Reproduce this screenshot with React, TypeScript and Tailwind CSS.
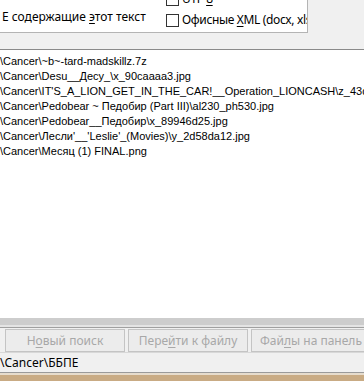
import React from "react";

const files = [
  "\\Cancer\\~b~-tard-madskillz.7z",
  "\\Cancer\\Desu__Десу_\\x_90caaaa3.jpg",
  "\\Cancer\\IT'S_A_LION_GET_IN_THE_CAR!__Operation_LIONCASH\\z_43d0b1f2.jpg",
  "\\Cancer\\Pedobear ~ Педобир (Part III)\\al230_ph530.jpg",
  "\\Cancer\\Pedobear__Педобир\\x_89946d25.jpg",
  "\\Cancer\\Лесли'__'Leslie'_(Movies)\\y_2d58da12.jpg",
  "\\Cancer\\Месяц (1) FINAL.png",
];

function Checkbox() {
  return <div className="w-[13px] h-[13px] border border-[#333333] bg-white shrink-0" />;
}

function Btn({ pre, u, post }: { pre: string; u: string; post: string }) {
  return (
    <div className="w-[120px] h-[23px] shrink-0 border border-[#c4c4c4] bg-[#ececec] flex items-center justify-center text-[#a8a8a8]">
      <span>
        {pre}
        <span className="underline underline-offset-2">{u}</span>
        {post}
      </span>
    </div>
  );
}

export default function App() {
  return (
    <div
      className="w-[364px] h-[381px] overflow-hidden bg-[#f0f0f0] text-[12px] text-black flex flex-col"
      style={{ fontFamily: '"Noto Sans", "Liberation Sans", sans-serif' }}
    >
      {/* tab page */}
      <div className="flex h-[33px] shrink-0">
        <div className="w-[308px] h-[33px] bg-white border-r border-b border-[#b4b4b4] flex overflow-hidden">
          <div className="w-[166px] shrink-0 pl-[2px] pt-[8px] leading-[17px] whitespace-nowrap">
            Е содержащие <span className="underline underline-offset-2">э</span>тот текст
          </div>
          <div className="flex flex-col gap-[3px] mt-[-10px] whitespace-nowrap tracking-[-0.35px]">
            <div className="flex items-center gap-[3px] h-[18px]">
              <Checkbox />
              <span>
                UTF-<span className="underline underline-offset-2">8</span>
              </span>
            </div>
            <div className="flex items-center gap-[3px] h-[18px]">
              <Checkbox />
              <span>
                Офисные <span className="underline underline-offset-2">X</span>ML (docx, xlsx)
              </span>
            </div>
          </div>
        </div>
      </div>

      {/* results list */}
      <div className="mt-[16px] h-[269px] shrink-0 bg-white border-t border-[#8a8a8a] pt-[4px] overflow-hidden">
        {files.map((f) => (
          <div
            key={f}
            className="h-[15px] leading-[15px] whitespace-nowrap text-[11px]"
            style={{ fontFamily: '"Liberation Sans", Arial, sans-serif' }}
          >
            {f}
          </div>
        ))}
      </div>

      <div className="h-[7px] shrink-0 bg-[#cdcdcd]" />
      <div className="h-[2px] shrink-0 bg-[#e4e4e4]" />
      <div className="h-[1px] shrink-0 bg-[#a0a0a0]" />

      {/* buttons */}
      <div className="flex gap-[3px] pl-[5px] pt-[1px] h-[24px] shrink-0">
        <Btn pre="Н" u="о" post="вый поиск" />
        <Btn pre="Пере" u="й" post="ти к файлу" />
        <Btn pre="Фай" u="л" post="ы на панель" />
      </div>

      {/* status bar */}
      <div className="h-[20px] shrink-0 border-t border-[#d8d8d8] flex items-center whitespace-nowrap">
        \Cancer\ББПЕ
      </div>
      <div className="h-[1px] shrink-0 bg-[#9a9a9a]" />
      <div className="h-[2px] shrink-0 bg-[#e6dccd]" />
      <div className="flex-1 bg-[#c9ab84]" />
    </div>
  );
}
